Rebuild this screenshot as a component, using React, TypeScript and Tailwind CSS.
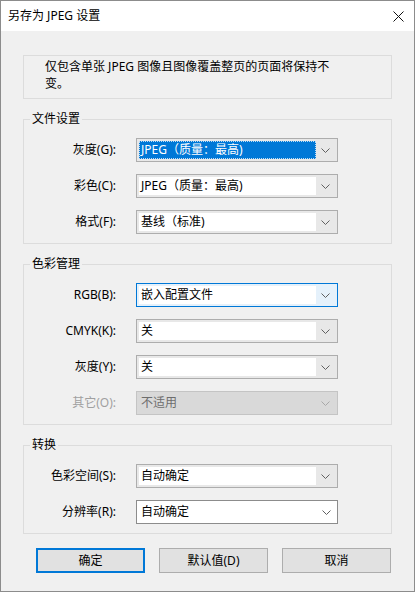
import type { ReactNode } from 'react';

type ComboState = 'normal' | 'selected' | 'focused' | 'disabled' | 'list';

const FONT = { fontFamily: '"Noto Sans", "Noto Sans CJK SC", sans-serif' };

/** 下拉箭头 */
function Chevron({ color = '#606060' }: { color?: string }) {
  return (
    <svg width="9" height="5" viewBox="0 0 9 5" fill="none">
      <path d="M0.5 0.5L4.5 4.5L8.5 0.5" stroke={color} strokeWidth="1" />
    </svg>
  );
}

/** 组合框 */
function Combo({ value, state = 'normal' }: { value: string; state?: ComboState }) {
  if (state === 'list') {
    return (
      <div className="flex h-[24px] w-[202px] items-center border border-[#8c8c8c] bg-white">
        <div className="flex-1 pl-[4px] text-black">{value}</div>
        <div className="flex w-[21px] items-center justify-center">
          <Chevron />
        </div>
      </div>
    );
  }

  const frame =
    state === 'focused'
      ? 'border-[#0078d7] bg-[#e5f1fb]'
      : state === 'disabled'
        ? 'border-[#c4c4c4] bg-[#d9d9d9]'
        : 'border-[#adadad] bg-[#e8e8e8]';

  const field =
    state === 'selected'
      ? 'bg-[#0078d7] text-white border border-dotted border-[#bcdcf5] pl-[1px]'
      : state === 'disabled'
        ? 'text-[#6d6d6d] pl-[2px]'
        : 'bg-white text-black pl-[2px]';

  return (
    <div className={`flex h-[24px] w-[202px] border p-[2px] ${frame}`}>
      <div className={`flex flex-1 items-center ${field}`}>{value}</div>
      <div className="flex w-[19px] items-center justify-center">
        <Chevron color={state === 'disabled' ? '#a8a8a8' : '#606060'} />
      </div>
    </div>
  );
}

/** 标签 + 组合框行 */
function Row({
  label,
  value,
  state,
}: {
  label: string;
  value: string;
  state?: ComboState;
}) {
  return (
    <div className="flex items-center gap-[20px]">
      <div
        className={`w-[92px] text-right ${state === 'disabled' ? 'text-[#a0a0a0]' : 'text-black'}`}
      >
        {label}
      </div>
      <Combo value={value} state={state} />
    </div>
  );
}

/** 分组框 */
function Group({ title, children }: { title: string; children: ReactNode }) {
  return (
    <fieldset className="border border-[#dcdcdc] pt-[11px] pb-[9px]">
      <legend className="ml-[6px] px-[2px] leading-[16px] text-black">{title}</legend>
      <div className="flex flex-col gap-[12px]">{children}</div>
    </fieldset>
  );
}

function Button({ children, primary }: { children: ReactNode; primary?: boolean }) {
  return (
    <div
      className={`flex h-[25px] w-[109px] items-center justify-center bg-[#e1e1e1] text-black ${
        primary ? 'border-2 border-[#0078d7]' : 'border border-[#adadad]'
      }`}
    >
      {children}
    </div>
  );
}

export default function App() {
  return (
    <div
      className="flex h-[592px] w-[415px] flex-col border border-[#8c8c8c] bg-[#f0f0f0] text-[12px] leading-[16px]"
      style={FONT}
    >
      {/* 标题栏 */}
      <div className="flex h-[30px] shrink-0 items-center justify-between bg-white pl-[7px] pr-[10px]">
        <span className="text-black">另存为 JPEG 设置</span>
        <svg width="11" height="11" viewBox="0 0 11 11" fill="none">
          <path d="M0.5 0.5L10.5 10.5M10.5 0.5L0.5 10.5" stroke="#111" strokeWidth="1" />
        </svg>
      </div>

      <div className="flex flex-col px-[22px] pt-[24px]">
        <div className="h-[44px] border border-[#dcdcdc] pl-[21px] pt-[2px] leading-[17px] text-black">
          仅包含单张 JPEG 图像且图像覆盖整页的页面将保持不
          <br />
          变。
        </div>

        <div className="mt-[12px] flex flex-col gap-[12px]">
          <Group title="文件设置">
            <Row label="灰度(G):" value="JPEG（质量：最高)" state="selected" />
            <Row label="彩色(C):" value="JPEG（质量：最高)" />
            <Row label="格式(F):" value="基线（标准)" />
          </Group>

          <Group title="色彩管理">
            <Row label="RGB(B):" value="嵌入配置文件" state="focused" />
            <Row label="CMYK(K):" value="关" />
            <Row label="灰度(Y):" value="关" />
            <Row label="其它(O):" value="不适用" state="disabled" />
          </Group>

          <Group title="转换">
            <Row label="色彩空间(S):" value="自动确定" />
            <Row label="分辨率(R):" value="自动确定" state="list" />
          </Group>
        </div>

        <div className="mt-[14px] flex gap-[14px] pl-[13px]">
          <Button primary>确定</Button>
          <Button>默认值(D)</Button>
          <Button>取消</Button>
        </div>
      </div>
    </div>
  );
}
